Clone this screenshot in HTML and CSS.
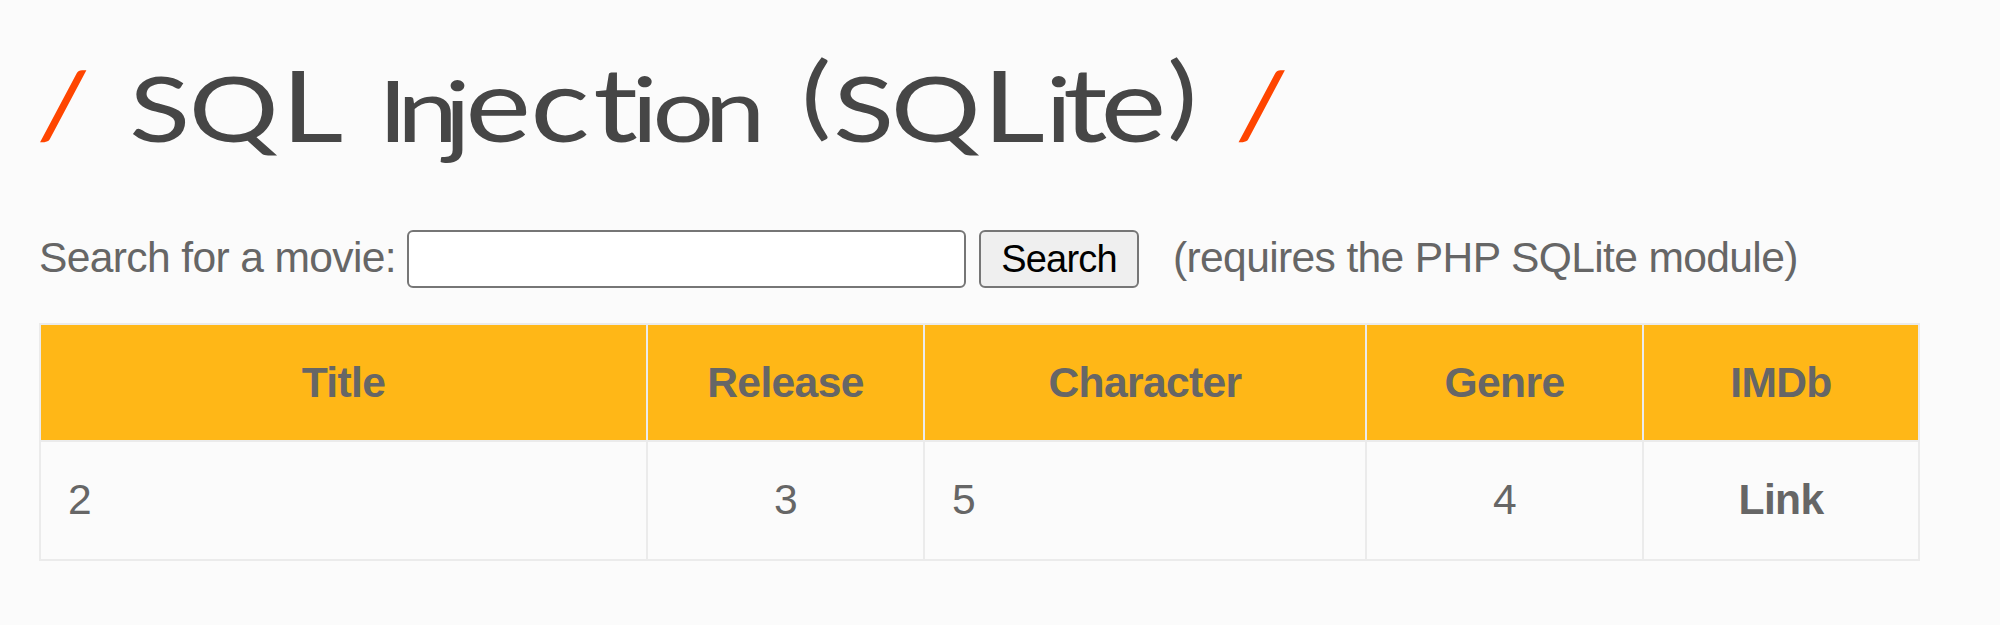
FILE: index.html
```html
<!DOCTYPE html>
<html lang="en">
<head>
<meta charset="utf-8">
<title>SQL Injection (SQLite)</title>
<link rel="stylesheet" href="styles.css">
</head>
<body>
<main class="page">
  <h1 class="heading">
    <svg class="heading-art" width="1300" height="190" viewBox="0 0 1300 190">
      <g transform="scale(1.22 1)">
        <text class="slash" transform="translate(50.8 138) skewX(-2)">/</text>
        <text class="title" y="142 142 142 142 142 142 146 142 142 142 142 142 142 142 128 142 142 142 142 142 142 128" x="131 191.5 256 290 322 350.4 375 408.2 459 504.5 528.5 560 602.5 635 669 708 767 831 867.8 889.5 928.9 969">SQ<tspan class="tall">L</tspan> <tspan class="short">I</tspan><tspan class="narrow">nj</tspan><tspan class="lower">ect</tspan><tspan class="narrow">ion</tspan> (SQ<tspan class="tall">L</tspan><tspan class="narrow">i</tspan><tspan class="lower">te</tspan>)</text>
        <text class="slash" transform="translate(1033 138) skewX(-2)">/</text>
      </g>
    </svg>
  </h1>
  <form class="search" onsubmit="return false">
    <label class="label" for="title">Search for a movie:</label>
    <input class="field" id="title" type="text">
    <button class="button" type="submit">Search</button>
    <span class="note">(requires the PHP SQLite module)</span>
  </form>
  <table class="movies">
    <colgroup><col class="col-title"><col class="col-small"><col class="col-character"><col class="col-small"><col class="col-last"></colgroup>
    <thead>
      <tr><th>Title</th><th>Release</th><th>Character</th><th>Genre</th><th>IMDb</th></tr>
    </thead>
    <tbody>
      <tr><td>2</td><td class="center">3</td><td>5</td><td class="center">4</td><td class="center link">Link</td></tr>
    </tbody>
  </table>
</main>
</body>
</html>
```
FILE: styles.css
```css
* { box-sizing: border-box; }
body {
  margin: 0;
  background: #fbfbfb;
  color: #666;
  font-family: "Liberation Sans", Arial, sans-serif;
  font-size: 42.6px;
  letter-spacing: -0.65px;
}
.page { height: 625px; overflow: hidden; }
.heading { margin: 0; height: 230px; font-weight: 400; letter-spacing: 0; }
.heading-art { display: block; overflow: visible; }
.title, .slash {
  font-family: Lato, sans-serif;
  font-size: 92px;
  text-anchor: middle;
}
.title { fill: #464646; }
.slash { fill: #ff4500; }
.tall { font-size: 99px; }
.short { font-size: 86px; }
.narrow { font-size: 89px; }
.lower { font-size: 102px; }
.search { display: flex; height: 58px; padding-left: 39px; }
.label { width: 368px; line-height: 54px; white-space: nowrap; }
.field {
  width: 559px;
  height: 58px;
  border: 2px solid #767676;
  border-radius: 6px;
  background: #fff;
}
.button {
  width: 160px;
  height: 58px;
  margin-left: 13px;
  padding: 0;
  border: 2px solid #767676;
  border-radius: 6px;
  background: #efefef;
  color: #000;
  font: 38px/54px "Liberation Sans", Arial, sans-serif;
  letter-spacing: -0.8px;
}
.note { margin-left: 34px; line-height: 54px; white-space: nowrap; }
.movies {
  width: 1879px;
  margin: 35px 0 0 39px;
  border-collapse: collapse;
  table-layout: fixed;
}
.col-title { width: 607px; }
.col-small { width: 277px; }
.col-character { width: 442px; }
.col-last { width: 276px; }
.movies th, .movies td {
  padding: 0 27px 1px;
  border: 2px solid #ebebeb;
  line-height: 48px;
}
.movies th { height: 117px; background: #ffb717; }
.movies td { height: 119px; padding-bottom: 3px; }
.center { text-align: center; }
.link { font-weight: 700; }
```
